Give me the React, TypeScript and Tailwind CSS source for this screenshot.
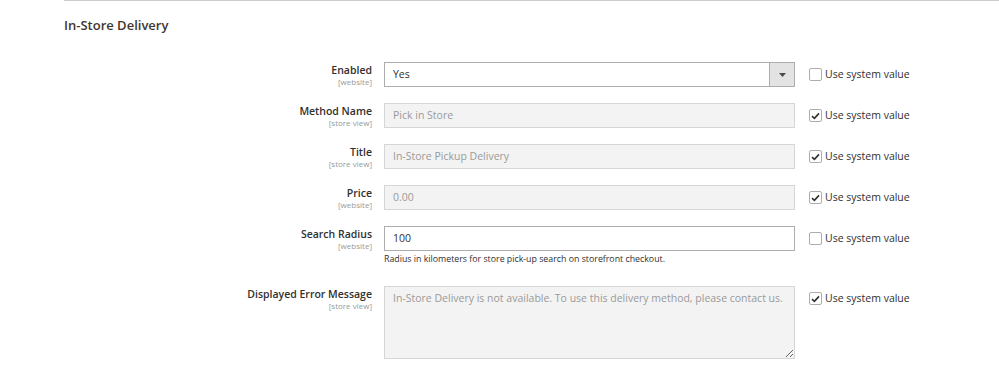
const Check = ({ checked }: { checked: boolean }) => (
  <span className="flex h-[13px] w-[13px] items-center justify-center rounded-[2px] border border-[#adadad] bg-white">
    {checked && (
      <svg width="9" height="8" viewBox="0 0 9 8">
        <path d="M1 4.2 L3.4 6.4 L8 1.4" fill="none" stroke="#303030" strokeWidth="1.6" />
      </svg>
    )}
  </span>
);

type Row = {
  label: string;
  scope: string;
  value: string;
  disabled: boolean;
  kind?: "select" | "textarea";
  note?: string;
};

const rows: Row[] = [
  { label: "Enabled", scope: "[website]", value: "Yes", disabled: false, kind: "select" },
  { label: "Method Name", scope: "[store view]", value: "Pick in Store", disabled: true },
  { label: "Title", scope: "[store view]", value: "In-Store Pickup Delivery", disabled: true },
  { label: "Price", scope: "[website]", value: "0.00", disabled: true },
  {
    label: "Search Radius",
    scope: "[website]",
    value: "100",
    disabled: false,
    note: "Radius in kilometers for store pick-up search on storefront checkout.",
  },
  {
    label: "Displayed Error Message",
    scope: "[store view]",
    value: "In-Store Delivery is not available. To use this delivery method, please contact us.",
    disabled: true,
    kind: "textarea",
  },
];

const Field = ({ row }: { row: Row }) => {
  const base = row.disabled
    ? "border-[#d6d6d6] bg-[#f3f3f3] text-[#9a9a9a]"
    : "border-[#adadad] bg-white text-[#303030]";

  if (row.kind === "select") {
    return (
      <div className={`flex h-[25px] w-[411px] items-center border ${base}`}>
        <span className="flex-1 pl-[8px] text-[10.5px]">{row.value}</span>
        <span className="flex h-full w-[25px] items-center justify-center border-l border-[#adadad] bg-[#e3e3e3]">
          <svg width="7" height="4" viewBox="0 0 7 4">
            <path d="M0 0 H7 L3.5 4 Z" fill="#514943" />
          </svg>
        </span>
      </div>
    );
  }

  if (row.kind === "textarea") {
    return (
      <textarea
        readOnly
        value={row.value}
        className={`block h-[73px] w-[411px] resize-y border px-[8px] py-[3px] text-[10.5px] leading-[16px] outline-none ${base}`}
      />
    );
  }

  return (
    <div className={`flex h-[25px] w-[411px] items-center border pl-[8px] text-[10.5px] ${base}`}>
      {row.value}
    </div>
  );
};

export default function App() {
  return (
    <div className="h-[376px] w-[999px] overflow-hidden bg-white font-['Open_Sans',sans-serif] text-[#303030]">
      <div className="ml-[64px] h-px bg-[#cccccc]" />
      <h2 className="ml-[64px] mt-[15px] text-[13px] font-semibold leading-[18px] text-[#41362f]">
        In-Store Delivery
      </h2>

      <div className="mt-[28px] flex flex-col gap-[16px]">
        {rows.map((row) => (
          <div key={row.label} className="flex items-start">
            <div className="w-[372px] shrink-0 pt-[2px] text-right">
              <div className="text-[10.5px] font-semibold leading-[13px] text-[#303030]">{row.label}</div>
              <div className="text-[8px] leading-[10px] text-[#999999]">{row.scope}</div>
            </div>
            <div className="ml-[12px] w-[411px] shrink-0">
              <Field row={row} />
              {row.note && (
                <div className="pb-[4px] pt-[2px] text-[8.8px] leading-[13px] text-[#303030]">{row.note}</div>
              )}
            </div>
            <label className="ml-[14px] flex h-[25px] items-center gap-[3px]">
              <Check checked={row.disabled} />
              <span className="text-[10.5px] text-[#303030]">Use system value</span>
            </label>
          </div>
        ))}
      </div>
    </div>
  );
}
